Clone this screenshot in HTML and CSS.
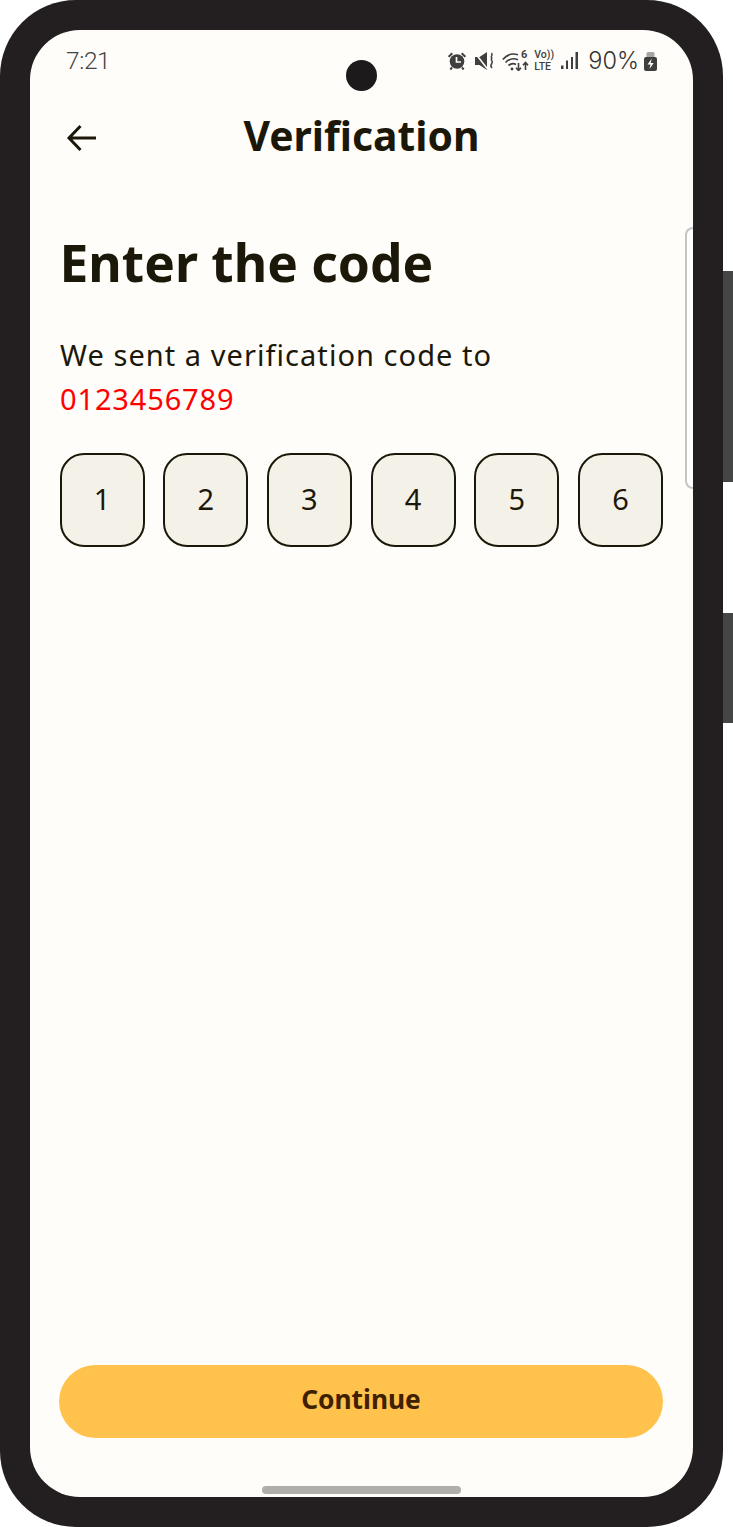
FILE: index.html
```html
<!DOCTYPE html>
<html lang="en">
<head>
<meta charset="utf-8">
<title>Verification</title>
<link rel="stylesheet" href="styles.css">
</head>
<body>
<div class="device">
  <span class="side-key side-key-power"></span>
  <span class="side-key side-key-volume"></span>
  <main class="screen">
    <span class="camera"></span>
    <span class="edge-handle"></span>
    <div class="status-bar">
      <span class="clock">7:21</span>
      <div class="status-icons">
        <svg class="ico-alarm" viewBox="0 0 18 18"><circle cx="9" cy="9.500" r="7.300" fill="#3f3f3f"/><path d="M8.500 5v5h4.500" fill="none" stroke="#fffdf9" stroke-width="1.700"/><path d="M.6 4.800L4.300 1.200M17.400 4.800L13.700 1.200M4 15.500L2.300 17.500M14 15.500l1.700 2" stroke="#3f3f3f" stroke-width="2" fill="none"/></svg>
        <svg class="ico-mute" viewBox="0 0 20 18"><path d="M0 5h4.500L12 0v18l-7.500-5H0z" fill="#3f3f3f"/><path d="M0 1l12.500 16" stroke="#fffdf9" stroke-width="1.600"/><path d="M16.500 1c2.200 2.200-1.800 3.200.3 5.300-2.100 2.200 2 2.700 0 5.200-1.200 1.500-1.200 3 .2 4.500" fill="none" stroke="#3f3f3f" stroke-width="1.500"/></svg>
        <span class="ico-wifi">
          <svg viewBox="0 0 28 20"><path d="M.8 8.500C5.500 3 11.500 2.300 16 3.800M3.500 11.500c4-4 8.500-4.500 12.500-2.700M6.500 14.500c2.500-2 5-2.300 7.500-1" fill="none" stroke="#3f3f3f" stroke-width="1.700"/><circle cx="10" cy="18" r="1.400" fill="#3f3f3f"/><path d="M16.500 12v7.500m-2.500-2.800l2.500 2.800 2.500-2.800M23.500 19v-7.500m-2.500 2.800l2.500-2.800 2.500 2.800" fill="none" stroke="#3f3f3f" stroke-width="1.600"/></svg>
          <b class="wifi-gen">6</b>
        </span>
        <span class="volte"><span>Vo))</span><span>LTE</span></span>
        <svg class="ico-signal" viewBox="0 0 17 18"><rect x="0" y="13.500" width="2.500" height="3.500" fill="#3f3f3f"/><rect x="5" y="8.500" width="2" height="8.500" fill="#3f3f3f"/><rect x="10" y="5" width="2" height="12" fill="#3f3f3f"/><rect x="14.500" y="0" width="2.500" height="17" fill="#3f3f3f"/></svg>
        <span class="battery-level">90%</span>
        <svg class="ico-battery" viewBox="0 0 13 19"><path d="M2.500 1.500Q2.500 0 4 0h5q1.500 0 1.500 1.500V6h-8z" fill="#a5a5a5"/><path d="M0 7q0-2 2-2h9q2 0 2 2v10q0 2-2 2H2q-2 0-2-2z" fill="#3f3f3f"/><path d="M7.800 6.500L3.500 12.500h3l-1 4.500 4.200-6h-3z" fill="#fffdf9"/></svg>
      </div>
    </div>
    <header class="app-bar">
      <svg class="back" viewBox="0 0 32 32"><path d="M30 16H3M14.500 4L3 16l11.500 12" fill="none" stroke="#1c1809" stroke-width="3"/></svg>
      <h1 class="app-title">Verification</h1>
    </header>
    <section class="content">
      <h2 class="heading">Enter the code</h2>
      <p class="lead">We sent a verification code to</p>
      <p class="phone">0123456789</p>
      <div class="code-row">
        <div class="cell">1</div>
        <div class="cell">2</div>
        <div class="cell">3</div>
        <div class="cell">4</div>
        <div class="cell">5</div>
        <div class="cell">6</div>
      </div>
    </section>
    <button class="continue" type="button">Continue</button>
    <div class="home-bar"><span class="home-pill"></span></div>
  </main>
</div>
</body>
</html>
```
FILE: styles.css
```css
* { box-sizing: border-box; }
html, body { margin: 0; padding: 0; background: #fff; }
body { width: 733px; height: 1527px; overflow: hidden; font-family: "Noto Sans", sans-serif; color: #1c1809; }

.device {
  position: relative;
  width: 723px;
  height: 1527px;
  padding: 30px;
  background: #231f20;
  border-radius: 76px;
}
.side-key { position: absolute; left: 723px; width: 10px; background: #454545; }
.side-key-power { top: 271px; height: 211px; }
.side-key-volume { top: 613px; height: 110px; }

.screen {
  position: relative;
  display: flex;
  flex-direction: column;
  width: 663px;
  height: 1467px;
  background: #fffdf9;
  border-radius: 50px;
  overflow: hidden;
}
.camera {
  position: absolute;
  left: 316px;
  top: 30px;
  width: 31px;
  height: 31px;
  border-radius: 50%;
  background: #1d1a1b;
}
.edge-handle {
  position: absolute;
  right: 0;
  top: 197px;
  width: 8px;
  height: 262px;
  border: 2px solid #c4c4c4;
  border-right: 0;
  border-radius: 8px 0 0 8px;
  background: #fff;
}

.status-bar {
  display: flex;
  justify-content: space-between;
  align-items: center;
  height: 34px;
  margin-top: 14px;
  padding: 0 36px;
  color: #4a4a4a;
}
.clock { font: 300 24.500px/1 Roboto, sans-serif; color: #444; letter-spacing: -0.4px; }
.status-icons { display: flex; align-items: center; }
.status-icons svg { display: block; flex: none; }
.ico-alarm { width: 18px; height: 18px; margin-right: 9px; }
.ico-mute { width: 20px; height: 18px; margin-right: 7px; }
.ico-wifi { position: relative; display: block; width: 28px; height: 20px; margin-right: 4px; }
.ico-wifi svg { width: 28px; height: 20px; }
.wifi-gen { position: absolute; right: 3px; top: -2px; font: 700 11px/1 Roboto, sans-serif; color: #3f3f3f; }
.volte { display: flex; flex-direction: column; width: 20px; margin-right: 7px; font: 500 10.500px/12.300px Roboto, sans-serif; color: #3f3f3f; white-space: nowrap; }
.ico-signal { width: 17px; height: 18px; margin-right: 10px; }
.battery-level { font: 300 23.500px/1 Inter, sans-serif; color: #333; margin-right: 5px; }
.ico-battery { width: 13px; height: 19px; }

.app-bar {
  position: relative;
  display: flex;
  justify-content: center;
  align-items: center;
  height: 52px;
  margin-top: 31px;
}
.back { position: absolute; left: 36px; top: 13px; width: 32px; height: 32px; }
.app-title { margin: 0; font-size: 40.800px; font-weight: 700; line-height: 52px; color: #1c1809; }

.content { flex: 1; padding: 0 30px 0 29.500px; }
.heading { margin: 67px 0 0; font-size: 51.500px; font-weight: 700; line-height: 68px; color: #1c1809; }
.lead { margin: 37px 0 0 0.500px; font-size: 29px; line-height: 44px; letter-spacing: 1.050px; color: #1c1809; }
.phone { margin: 0 0 0 0.500px; font-size: 29px; line-height: 44px; letter-spacing: 0.850px; color: #ff0000; }
.code-row { display: flex; justify-content: space-between; margin-top: 32px; }
.cell {
  display: flex;
  align-items: center;
  justify-content: center;
  width: 85px;
  height: 94px;
  padding-bottom: 3px;
  font-size: 29px;
  color: #1c1809;
  background: #f4f1e8;
  border: 2px solid #1c1809;
  border-radius: 24px;
}

.continue {
  display: block;
  width: 604px;
  height: 73px;
  margin: 0 0 0 29px;
  border: 0;
  padding: 0 0 4px;
  border-radius: 37px;
  background: #ffc24d;
  color: #3f2000;
  font: 700 26.300px/1 "Noto Sans", sans-serif;
}
.home-bar { display: flex; justify-content: center; align-items: flex-end; height: 59px; }
.home-pill { display: block; width: 199px; height: 8px; margin-bottom: 3px; border-radius: 4px; background: #b0aeaa; }
```
